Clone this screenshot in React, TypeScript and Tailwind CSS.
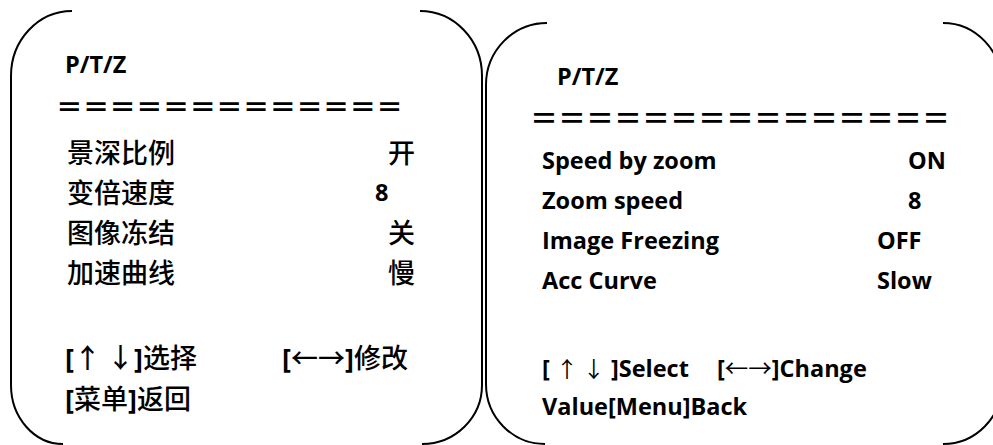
import React from "react";

const latin = "font-['Open_Sans','Noto_Sans_CJK_SC',sans-serif] font-bold";
const cjk = "font-['Noto_Sans_CJK_SC',sans-serif] font-medium";

const zhRows = [
  { label: "景深比例", value: "开", pad: "pl-[13px]", latinValue: false },
  { label: "变倍速度", value: "8", pad: "pl-0", latinValue: true },
  { label: "图像冻结", value: "关", pad: "pl-[13px]", latinValue: false },
  { label: "加速曲线", value: "慢", pad: "pl-[13px]", latinValue: false },
];

const enRows = [
  { label: "Speed by zoom", value: "ON", pad: "pl-[31px]" },
  { label: "Zoom speed", value: "8", pad: "pl-[31px]" },
  { label: "Image Freezing", value: "OFF", pad: "pl-0" },
  { label: "Acc Curve", value: "Slow", pad: "pl-0" },
];

// the rounded side brackets of an OSD frame (no top / bottom edge)
function Frame({ w, h, paths }: { w: number; h: number; paths: string[] }) {
  return (
    <svg
      className="pointer-events-none absolute left-0 top-0"
      width={w}
      height={h}
      viewBox={`0 0 ${w} ${h}`}
      fill="none"
    >
      {paths.map((d) => (
        <path key={d} d={d} stroke="#000" strokeWidth={2} />
      ))}
    </svg>
  );
}

export default function App() {
  return (
    <div className="flex h-[445px] w-[993px] overflow-hidden bg-white text-black">
      {/* Chinese menu */}
      <div className="relative ml-[10px] mt-[10px] h-[435px] w-[474px] flex-none">
        <Frame
          w={474}
          h={435}
          paths={[
            "M62 1 A61 65 0 0 0 1 66 V375 A52 59 0 0 0 53 434",
            "M410 1 A62 65 0 0 1 472 66 V375 A60 59 0 0 1 412 434",
          ]}
        />
        <div className={`${latin} pl-[55px] pt-[38px] text-[23.5px] leading-[32px]`}>P/T/Z</div>
        <div className="pl-[46px] pt-[11px] font-['Noto_Sans_CJK_SC',sans-serif] text-[26.7px] font-bold leading-[30px] whitespace-nowrap">
          ＝＝＝＝＝＝＝＝＝＝＝＝＝
        </div>
        <div className="pt-[11px]">
          {zhRows.map((r) => (
            <div key={r.label} className="flex h-[40px] items-center pl-[57px]">
              <span className={`${cjk} w-[308px] text-[27px] leading-[40px]`}>{r.label}</span>
              <span
                className={`${r.pad} ${r.latinValue ? `${latin} text-[23.5px]` : `${cjk} text-[27px]`} leading-[40px]`}
              >
                {r.value}
              </span>
            </div>
          ))}
        </div>
        <div className="pl-[55px] pt-[45px] text-[27px] leading-[40px]">
          <div className="flex">
            <span className="w-[217px]">
              <span className={latin}>[</span>
              <span className={cjk}>↑ ↓</span>
              <span className={latin}>]</span>
              <span className={cjk}>选择</span>
            </span>
            <span>
              <span className={latin}>[</span>
              <span className={cjk}>←→</span>
              <span className={latin}>]</span>
              <span className={cjk}>修改</span>
            </span>
          </div>
          <div>
            <span className={latin}>[</span>
            <span className={cjk}>菜单</span>
            <span className={latin}>]</span>
            <span className={cjk}>返回</span>
          </div>
        </div>
      </div>

      {/* English menu */}
      <div className="relative ml-[1px] mt-[22px] h-[423px] w-[518px] flex-none">
        <Frame
          w={518}
          h={423}
          paths={[
            "M62 1 A61 62 0 0 0 1 63 V362 A59 60 0 0 0 60 422",
            "M458 1 A59 62 0 0 1 517 63 V362 A59 60 0 0 1 458 422",
          ]}
        />
        <div className={`${latin} pl-[72px] pt-[38px] text-[23.5px] leading-[32px]`}>P/T/Z</div>
        <div className="pl-[45px] pt-[10px] font-['Noto_Sans_CJK_SC',sans-serif] text-[28px] font-bold leading-[30px] whitespace-nowrap">
          ＝＝＝＝＝＝＝＝＝＝＝＝＝＝＝
        </div>
        <div className="pt-[8px]">
          {enRows.map((r) => (
            <div key={r.label} className={`${latin} flex h-[40px] items-center pl-[57px] text-[23.5px]`}>
              <span className="w-[335px] leading-[40px]">{r.label}</span>
              <span className={`${r.pad} leading-[40px]`}>{r.value}</span>
            </div>
          ))}
        </div>
        <div className={`${latin} pl-[57px] pt-[48px] text-[23.5px] leading-[38px]`}>
          <div className="flex">
            <span className="w-[175px]">
              [ <span className="font-['Noto_Sans_CJK_SC',sans-serif] text-[22px] font-normal">↑ ↓</span> ]Select
            </span>
            <span>
              [<span className="font-['Noto_Sans_CJK_SC',sans-serif] font-normal">←→</span>]Change
            </span>
          </div>
          <div>Value[Menu]Back</div>
        </div>
      </div>
    </div>
  );
}
